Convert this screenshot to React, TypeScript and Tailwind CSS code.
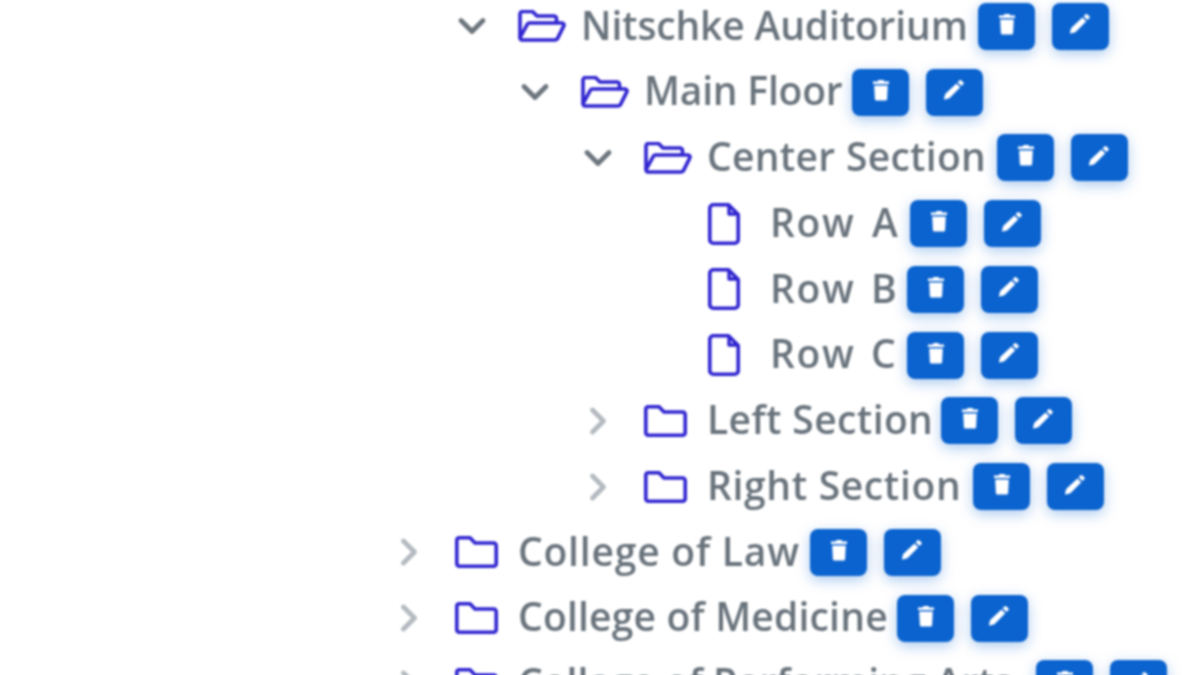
type Item = {
  label: string;
  labelClass: string;
  kind: "open" | "closed" | "file";
  children?: Item[];
};

const tree: Item[] = [
  {
    label: "Nitschke Auditorium",
    labelClass: "w-[397px] tracking-[-0.15px]",
    kind: "open",
    children: [
      {
        label: "Main Floor",
        labelClass: "w-[208px] tracking-[-0.2px]",
        kind: "open",
        children: [
          {
            label: "Center Section",
            labelClass: "w-[290px] tracking-[0.3px]",
            kind: "open",
            children: [
              { label: "Row A", labelClass: "w-[140px] tracking-[1.6px] [word-spacing:5px]", kind: "file" },
              { label: "Row B", labelClass: "w-[137px] tracking-[1.6px] [word-spacing:4px]", kind: "file" },
              { label: "Row C", labelClass: "w-[137px] tracking-[1.6px] [word-spacing:4px]", kind: "file" },
            ],
          },
          { label: "Left Section", labelClass: "w-[234px] tracking-[0.4px]", kind: "closed" },
          { label: "Right Section", labelClass: "w-[266px] tracking-[0.65px]", kind: "closed" },
        ],
      },
    ],
  },
];

const colleges: Item[] = [
  { label: "College of Law", labelClass: "w-[292px] tracking-[0.8px]", kind: "closed" },
  { label: "College of Medicine", labelClass: "w-[379px] tracking-[0.2px]", kind: "closed" },
  { label: "College of Performing Arts", labelClass: "w-[518px]", kind: "closed" },
];

function Chevron({ kind }: { kind: Item["kind"] }) {
  if (kind === "open") {
    return (
      <svg width="30" height="20" viewBox="0 0 30 20" fill="none" className="text-[#6c757d]">
        <path d="M4 4.5l11 11 11-11" stroke="currentColor" strokeWidth="4.8" strokeLinecap="round" strokeLinejoin="round" />
      </svg>
    );
  }
  if (kind === "closed") {
    return (
      <svg width="20" height="30" viewBox="0 0 20 30" fill="none" className="text-[#b4bac0]">
        <path d="M4.5 4l11 11-11 11" stroke="currentColor" strokeWidth="4.8" strokeLinecap="round" strokeLinejoin="round" />
      </svg>
    );
  }
  return null;
}

function NodeIcon({ kind }: { kind: Item["kind"] }) {
  if (kind === "open") {
    return (
      <svg width="48" height="32" viewBox="0 0 48 32" fill="none" className="text-[#2f24d0]">
        <path
          d="M2 28V4a2.5 2.5 0 012.5-2.5h10L19 6h17a2.5 2.5 0 012.5 2.5V13"
          stroke="currentColor"
          strokeWidth="3.6"
          strokeLinejoin="round"
        />
        <path
          d="M11.5 13H44a2 2 0 011.8 2.9l-6.5 13A3 3 0 0137 30H4.2a2 2 0 01-1.8-3l7-12.8A2.4 2.4 0 0111.5 13z"
          stroke="currentColor"
          strokeWidth="3.6"
          strokeLinejoin="round"
        />
      </svg>
    );
  }
  if (kind === "closed") {
    return (
      <svg width="43" height="32" viewBox="0 0 43 32" fill="none" className="text-[#2f24d0]">
        <path
          d="M1.8 4A2.5 2.5 0 014.3 1.8h10.7L20 7h18.7a2.5 2.5 0 012.5 2.5V27.7a2.5 2.5 0 01-2.5 2.5H4.3a2.5 2.5 0 01-2.5-2.5z"
          stroke="currentColor"
          strokeWidth="3.6"
          strokeLinejoin="round"
        />
      </svg>
    );
  }
  return (
    <svg width="32" height="42" viewBox="0 0 32 42" fill="none" className="ml-[1px] text-[#2f24d0]">
      <path
        d="M1.8 5A3.5 3.5 0 015.3 1.8h15.2l9.7 9.7V37a3.5 3.5 0 01-3.5 3.2H5.3A3.5 3.5 0 011.8 37z"
        stroke="currentColor"
        strokeWidth="3.6"
        strokeLinejoin="round"
      />
      <path d="M21 2v9h9" stroke="currentColor" strokeWidth="3.4" strokeLinejoin="round" />
    </svg>
  );
}

function TrashIcon() {
  return (
    <svg width="18" height="22" viewBox="0 0 18 22" fill="currentColor" className="mb-[5px]">
      <path d="M6.5 1h5l.8 1.5H17V5H1V2.5h4.7z" />
      <path d="M2.2 6.5h13.6l-.7 13.7a1.4 1.4 0 01-1.4 1.3H4.3a1.4 1.4 0 01-1.4-1.3z" />
    </svg>
  );
}

function PencilIcon() {
  return (
    <svg width="22" height="21" viewBox="0 0 22 21" fill="currentColor" className="mb-[5px]">
      <path d="M16.4 1.4a1.4 1.4 0 012 0l1.9 1.9a1.4 1.4 0 010 2L18.5 7.1 14.6 3.2z" />
      <path d="M13.4 4.4l3.9 3.9L6.4 19.2l-4.7 1.3a.6.6 0 01-.7-.7l1.2-4.7z" />
    </svg>
  );
}

function ActionButton({ children }: { children: React.ReactNode }) {
  return (
    <button className="flex h-[47px] w-[57px] items-center justify-center rounded-[8px] bg-[#0b63cf] text-white shadow-[0_4px_14px_rgba(14,102,208,0.35)]">
      {children}
    </button>
  );
}

function Row({ item }: { item: Item }) {
  return (
    <li>
      <div className="flex h-[65.75px] items-center">
        <div className="flex w-[46px] items-center justify-center">
          <Chevron kind={item.kind} />
        </div>
        <div className="ml-[23px] w-[63px]">
          <NodeIcon kind={item.kind} />
        </div>
        <span className={`${item.labelClass} whitespace-nowrap pb-[3px]`}>{item.label}</span>
        <div className="flex gap-[16.5px]">
          <ActionButton>
            <TrashIcon />
          </ActionButton>
          <ActionButton>
            <PencilIcon />
          </ActionButton>
        </div>
      </div>
      {item.children && (
        <ul className="pl-[63px]">
          {item.children.map((child) => (
            <Row key={child.label} item={child} />
          ))}
        </ul>
      )}
    </li>
  );
}

export default function App() {
  return (
    <div className="h-[675px] overflow-hidden bg-white font-['Open_Sans',sans-serif] text-[39px] font-semibold text-[#69737c]">
      <ul className="-mt-[6.5px] pl-[386px] blur-[0.8px]">
        <li>
          <ul className="pl-[63px]">
            {tree.map((item) => (
              <Row key={item.label} item={item} />
            ))}
          </ul>
        </li>
        {colleges.map((item) => (
          <Row key={item.label} item={item} />
        ))}
      </ul>
    </div>
  );
}
